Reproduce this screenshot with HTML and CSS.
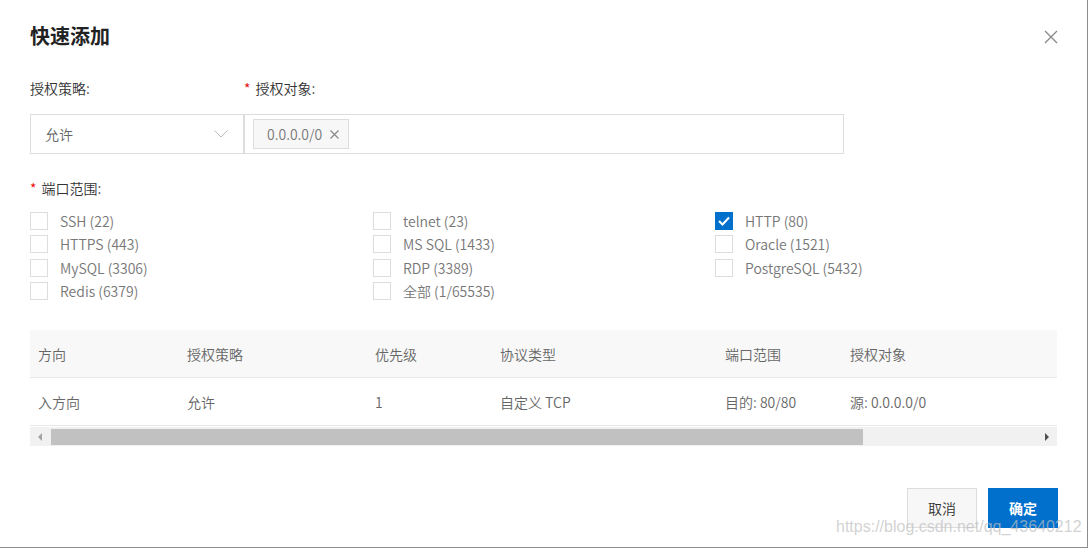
FILE: index.html
```html
<!DOCTYPE html>
<html lang="zh-CN">
<head>
    <meta charset="UTF-8">
    <title>快速添加</title>
    <link rel="stylesheet" href="styles.css">
</head>
<body>
    <div class="dialog">
        <div class="dialog-header">
            <h2 class="title">快速添加</h2>
            <span class="close-btn">
                <svg width="14" height="14" viewBox="0 0 14 14"><path d="M1 1L13 13M13 1L1 13" stroke="#888" stroke-width="1.3" fill="none"/></svg>
            </span>
        </div>

        <div class="form-row">
            <div class="field field-policy">
                <div class="label">授权策略:</div>
                <div class="select">
                    <span>允许</span>
                    <svg width="14" height="8" viewBox="0 0 14 8"><path d="M0.5 0.5L7 7L13.5 0.5" stroke="#bbb" stroke-width="1" fill="none"/></svg>
                </div>
            </div>
            <div class="field field-target">
                <div class="label"><span class="req">*</span>授权对象:</div>
                <div class="tag-input">
                    <span class="tag">0.0.0.0/0
                        <svg class="tag-x" width="9" height="9" viewBox="0 0 9 9"><path d="M0.5 0.5L8.5 8.5M8.5 0.5L0.5 8.5" stroke="#888" stroke-width="1.2" fill="none"/></svg>
                    </span>
                </div>
            </div>
        </div>

        <div class="label ports-label"><span class="req">*</span>端口范围:</div>
        <div class="ports">
            <label class="check"><span class="box"></span>SSH (22)</label>
            <label class="check"><span class="box"></span>telnet (23)</label>
            <label class="check"><span class="box checked"><svg width="18" height="18" viewBox="0 0 18 18"><path d="M4 9L7.5 12.5L14 5.5" stroke="#fff" stroke-width="2" fill="none"/></svg></span>HTTP (80)</label>
            <label class="check"><span class="box"></span>HTTPS (443)</label>
            <label class="check"><span class="box"></span>MS SQL (1433)</label>
            <label class="check"><span class="box"></span>Oracle (1521)</label>
            <label class="check"><span class="box"></span>MySQL (3306)</label>
            <label class="check"><span class="box"></span>RDP (3389)</label>
            <label class="check"><span class="box"></span>PostgreSQL (5432)</label>
            <label class="check"><span class="box"></span>Redis (6379)</label>
            <label class="check"><span class="box"></span>全部 (1/65535)</label>
        </div>

        <div class="table-wrap">
            <table class="rules">
                <thead>
                    <tr>
                        <th class="c1">方向</th>
                        <th class="c2">授权策略</th>
                        <th class="c3">优先级</th>
                        <th class="c4">协议类型</th>
                        <th class="c5">端口范围</th>
                        <th>授权对象</th>
                    </tr>
                </thead>
                <tbody>
                    <tr>
                        <td>入方向</td>
                        <td>允许</td>
                        <td>1</td>
                        <td>自定义 TCP</td>
                        <td>目的: 80/80</td>
                        <td>源: 0.0.0.0/0</td>
                    </tr>
                </tbody>
            </table>
            <div class="scrollbar">
                <span class="arrow arrow-left"></span>
                <span class="thumb"></span>
                <span class="arrow arrow-right"></span>
            </div>
        </div>

        <div class="footer">
            <button class="btn btn-cancel">取消</button>
            <button class="btn btn-ok">确定</button>
        </div>

        <div class="watermark">https://blog.csdn.net/qq_43640212</div>
    </div>
</body>
</html>
```

FILE: styles.css
```css
body {
    margin: 0;
    background-color: #fff;
    font-family: "Noto Sans CJK SC", sans-serif;
    font-size: 14px;
    font-weight: 350;
    color: #333;
}

.dialog {
    position: relative;
    box-sizing: border-box;
    width: 1088px;
    height: 548px;
    padding: 22px 30px 0;
    border-right: 1px solid #8c8c8c;
    border-bottom: 1px solid #8c8c8c;
    overflow: hidden;
}

.dialog-header {
    display: flex;
    justify-content: space-between;
    align-items: center;
    height: 28px;
}

.title {
    margin: 0;
    font-size: 20px;
    line-height: 28px;
    font-weight: bold;
    color: #222;
}

.close-btn {
    display: flex;
    margin-right: -1px;
    margin-top: 1px;
}

.label {
    height: 20px;
    line-height: 20px;
    color: #333;
}

.req {
    color: #e00;
    margin-right: 5px;
}

.form-row {
    display: flex;
    margin-top: 28px;
}

.field-policy {
    width: 214px;
}

.field-target {
    width: 600px;
}

.select {
    box-sizing: border-box;
    display: flex;
    justify-content: space-between;
    align-items: center;
    height: 40px;
    margin-top: 16px;
    padding: 0 15px 0 14px;
    border: 1px solid #ddd;
    color: #666;
}

.tag-input {
    box-sizing: border-box;
    display: flex;
    align-items: center;
    height: 40px;
    margin-top: 16px;
    padding: 0 8px;
    border: 1px solid #ddd;
}

.tag {
    box-sizing: border-box;
    display: flex;
    align-items: center;
    height: 30px;
    padding: 0 9px 0 13px;
    background-color: #f7f7f7;
    border: 1px solid #ddd;
    color: #777;
}

.tag-x {
    margin-left: 8px;
}

.ports-label {
    margin-top: 24px;
}

.ports {
    display: grid;
    grid-template-columns: 343px 342px 1fr;
    grid-auto-rows: 23.3px;
    margin-top: 14px;
}

.check {
    display: flex;
    align-items: flex-start;
    color: #777;
    line-height: 18px;
}

.box {
    box-sizing: border-box;
    display: flex;
    width: 18px;
    height: 18px;
    margin-right: 12px;
    border: 1px solid #ddd;
}

.box.checked {
    background-color: #0070cc;
    border-color: #0070cc;
}

.box.checked svg {
    margin: -1px;
}

.table-wrap {
    margin-top: 25px;
}

.rules {
    width: 100%;
    border-collapse: collapse;
    color: #666;
}

.rules th {
    height: 47px;
    padding: 0 8px;
    text-align: left;
    font-weight: 350;
    background-color: #f8f8f8;
    border-bottom: 1px solid #e8e8e8;
}

.rules td {
    height: 47px;
    padding: 0 8px;
    border-bottom: 1px solid #e8e8e8;
}

.rules .c1 { width: 133px; }
.rules .c2 { width: 172px; }
.rules .c3 { width: 109px; }
.rules .c4 { width: 209px; }
.rules .c5 { width: 109px; }

.scrollbar {
    display: flex;
    align-items: center;
    height: 19px;
    margin-top: 1px;
    background-color: #f1f1f1;
}

.thumb {
    width: 812px;
    height: 16px;
    background-color: #c1c1c1;
}

.arrow {
    width: 0;
    height: 0;
    border-top: 4px solid transparent;
    border-bottom: 4px solid transparent;
}

.arrow-left {
    margin: 0 9px 0 8px;
    border-right: 4px solid #a3a3a3;
}

.arrow-right {
    margin-left: auto;
    margin-right: 8px;
    border-left: 4px solid #505050;
}

.footer {
    display: flex;
    justify-content: flex-end;
    gap: 11px;
    margin-top: 42px;
    margin-right: -1px;
}

.btn {
    box-sizing: border-box;
    width: 70px;
    height: 40px;
    font-size: 14px;
    font-family: "Noto Sans CJK SC", sans-serif;
    font-weight: 350;
    cursor: pointer;
}

.btn-cancel {
    background-color: #f7f7f7;
    border: 1px solid #ddd;
    color: #333;
}

.btn-ok {
    background-color: #0070cc;
    border: 1px solid #0070cc;
    color: #fff;
    font-weight: bold;
}

.watermark {
    position: absolute;
    left: 836px;
    top: 518px;
    font-family: "Liberation Sans", sans-serif;
    font-size: 16px;
    color: rgba(190, 190, 190, 0.7);
    pointer-events: none;
}
```
